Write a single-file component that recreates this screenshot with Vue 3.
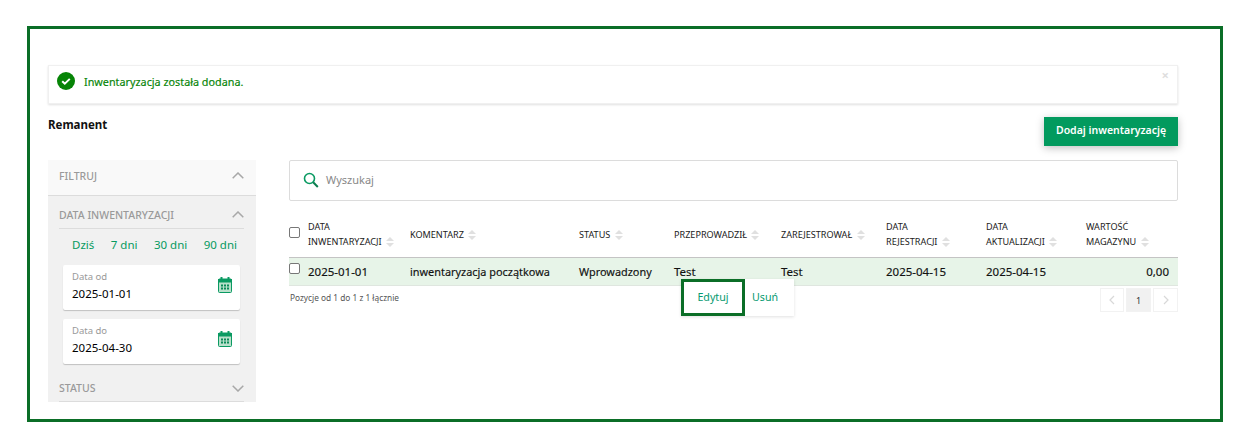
<script setup>
const columns = [
  { lines: ['DATA', 'INWENTARYZACJI'] },
  { lines: ['KOMENTARZ'] },
  { lines: ['STATUS'] },
  { lines: ['PRZEPROWADZIŁ'] },
  { lines: ['ZAREJESTROWAŁ'] },
  { lines: ['DATA', 'REJESTRACJI'] },
  { lines: ['DATA', 'AKTUALIZACJI'] },
  { lines: ['WARTOŚĆ', 'MAGAZYNU'] }
]
const row = [
  { v: '2025-01-01', c: 'date-cell' },
  { v: 'inwentaryzacja początkowa', c: '' },
  { v: 'Wprowadzony', c: '' },
  { v: 'Test', c: 'date-cell' },
  { v: 'Test', c: 'date-cell' },
  { v: '2025-04-15', c: 'date-cell' },
  { v: '2025-04-15', c: 'date-cell' },
  { v: '0,00', c: 'num date-cell' }
]
const ranges = ['Dziś', '7 dni', '30 dni', '90 dni']
const dates = [
  { label: 'Data od', value: '2025-01-01' },
  { label: 'Data do', value: '2025-04-30' }
]
</script>

<template>
  <div class="frame">
    <div class="alert">
      <svg class="ok" width="18" height="18" viewBox="0 0 18 18">
        <circle cx="9" cy="9" r="9" fill="#068406" />
        <path d="M5.2 9.2l2.6 2.5 5-4.8" fill="none" stroke="#fff" stroke-width="2" />
      </svg>
      <span class="alert-text">Inwentaryzacja została dodana.</span>
      <span class="close">×</span>
    </div>

    <div class="head">
      <h1>Remanent</h1>
      <button class="add">Dodaj inwentaryzację</button>
    </div>

    <div class="main">
      <aside class="side">
        <div class="sec-top">
          <span>FILTRUJ</span>
          <svg width="12" height="7" viewBox="0 0 12 7"><path d="M.7 6.3L6 1l5.3 5.3" fill="none" stroke="#a8a8a8" stroke-width="1.5" /></svg>
        </div>
        <div class="sec-body">
          <div class="sec-title">
            <span>DATA INWENTARYZACJI</span>
            <svg width="12" height="7" viewBox="0 0 12 7"><path d="M.7 6.3L6 1l5.3 5.3" fill="none" stroke="#a8a8a8" stroke-width="1.5" /></svg>
          </div>
          <div class="ranges">
            <a v-for="r in ranges" :key="r">{{ r }}</a>
          </div>
          <div v-for="d in dates" :key="d.label" class="date">
            <div>
              <div class="date-label">{{ d.label }}</div>
              <div class="date-value">{{ d.value }}</div>
            </div>
            <svg class="cal" width="14" height="16" viewBox="0 0 14 16">
              <rect x="0.5" y="2" width="13" height="13.5" rx="1" fill="#b9e0cb" stroke="#0a9a62" />
              <rect x="0" y="2" width="14" height="3.5" fill="#0a9a62" />
              <rect x="2.5" y="0" width="2" height="3" fill="#0a9a62" />
              <rect x="9.5" y="0" width="2" height="3" fill="#0a9a62" />
              <path d="M3 7.5h2v2H3zM6 7.5h2v2H6zM9 7.5h2v2H9zM3 10.5h2v2H3zM6 10.5h2v2H6zM9 10.5h2v2H9z" fill="#0a8a58" />
            </svg>
          </div>
          <div class="sec-title status">
            <span>STATUS</span>
            <svg width="12" height="7" viewBox="0 0 12 7"><path d="M.7.7L6 6l5.3-5.3" fill="none" stroke="#a8a8a8" stroke-width="1.5" /></svg>
          </div>
        </div>
      </aside>

      <section class="content">
        <div class="search">
          <svg width="16" height="16" viewBox="0 0 16 16">
            <circle cx="6.5" cy="6.5" r="5" fill="none" stroke="#0a9a62" stroke-width="1.6" />
            <path d="M10.2 10.2l4.6 4.8" stroke="#0b7d4f" stroke-width="2" />
          </svg>
          <span>Wyszukaj</span>
        </div>

        <div class="thead">
          <div class="check-cell"><span class="check"></span></div>
          <div v-for="c in columns" :key="c.lines.join()" class="th">
            <div v-for="(l, i) in c.lines" :key="l" class="th-line">
              {{ l }}
              <svg v-if="i === c.lines.length - 1" class="sort" width="8" height="10" viewBox="0 0 8 10">
                <path d="M4 0l4 4H0zM4 10L0 6h8z" fill="#e0e0e0" />
              </svg>
            </div>
          </div>
        </div>

        <div class="tbody">
          <div class="check-cell"><span class="check"></span></div>
          <div v-for="(cell, i) in row" :key="i" class="td" :class="cell.c">{{ cell.v }}</div>

          <div class="actions">
            <a class="edit">Edytuj</a>
            <a class="del">Usuń</a>
          </div>
        </div>

        <div class="foot">
          <span class="count">Pozycje od 1 do 1 z 1 łącznie</span>
          <div class="pager">
            <span class="pg">
              <svg width="6" height="10" viewBox="0 0 6 10"><path d="M5 1L1 5l4 4" fill="none" stroke="#d8d8d8" stroke-width="1.2" /></svg>
            </span>
            <span class="pg cur">1</span>
            <span class="pg">
              <svg width="6" height="10" viewBox="0 0 6 10"><path d="M1 1l4 4-4 4" fill="none" stroke="#d8d8d8" stroke-width="1.2" /></svg>
            </span>
          </div>
        </div>
      </section>
    </div>
  </div>
</template>

<style scoped>
.frame {
  box-sizing: border-box;
  width: 1196px;
  height: 396px;
  margin: 26px 0 0 27px;
  padding: 36px 42px 0 18px;
  border: 3px solid #0b6e27;
  font-family: "Noto Sans", sans-serif;
  color: #111;
  background: #fff;
}
.alert {
  box-sizing: border-box;
  height: 39px;
  display: flex;
  align-items: center;
  gap: 9px;
  padding: 0 0 7px 8px;
  position: relative;
  border: 1px solid #f0f0f0;
  box-shadow: 0 1px 2px rgba(0, 0, 0, .12);
}
.ok { flex: none; }
.alert-text { font-size: 10.8px; color: #068406; -webkit-text-stroke: .15px #068406; }
.close {
  position: absolute;
  right: 8px;
  top: 1px;
  font-size: 13px;
  line-height: 16px;
  font-weight: 700;
  color: #dedede;
}
.head {
  display: flex;
  justify-content: space-between;
  align-items: flex-start;
  margin-top: 13px;
  height: 43px;
}
h1 {
  margin: 0;
  font-size: 11.5px;
  line-height: 16px;
  font-weight: 700;
  color: #111;
}
.add {
  width: 134px;
  height: 29px;
  border: 0;
  padding: 0 0 3px;
  background: #029a5e;
  color: #fff;
  font: 600 10.5px "Noto Sans", sans-serif;
  box-shadow: 0 2px 8px rgba(0, 0, 0, .25);
}
.main { display: flex; gap: 33px; align-items: flex-start; }
.side { width: 208px; flex: none; }
.sec-top {
  box-sizing: border-box;
  height: 36px;
  padding: 0 12px 4px 11px;
  display: flex;
  justify-content: space-between;
  align-items: center;
  background: #f9f9f9;
  border-bottom: 1px solid #dcdcdc;
  font-size: 10.5px;
  font-weight: 500;
  color: #9a9a9a;
}
.sec-body {
  box-sizing: border-box;
  height: 206px;
  padding: 0 12px 0 11px;
  background: #f1f1f1;
}
.sec-title {
  box-sizing: border-box;
  height: 33px;
  padding-top: 5px;
  display: flex;
  justify-content: space-between;
  align-items: center;
  border-bottom: 1px solid #dcdcdc;
  font-size: 10.5px;
  font-weight: 500;
  color: #9a9a9a;
}
.sec-title.status { height: 29px; padding-top: 2px; margin-top: 9px; }
.ranges {
  display: flex;
  justify-content: space-between;
  padding: 8px 7px 0 13px;
  height: 19px;
  margin-bottom: 9px;
  font-size: 11.5px;
  line-height: 16px;
  color: #069a60;
}
.date {
  box-sizing: border-box;
  width: 177px;
  height: 45px;
  margin: 0 0 9px 4px;
  padding: 5px 8px 0 9px;
  display: flex;
  justify-content: space-between;
  background: #fff;
  border-radius: 2px;
  box-shadow: 0 1px 1px rgba(0, 0, 0, .2);
}
.date-label { font-size: 9.5px; line-height: 13px; color: #999; }
.date-value { font-size: 11.5px; line-height: 18px; margin-top: 2px; color: #000; }
.cal { margin-top: 7px; }
.content { flex: 1; min-width: 0; }
.search {
  box-sizing: border-box;
  height: 41px;
  display: flex;
  align-items: center;
  gap: 7px;
  padding: 0 0 2px 13px;
  border: 1px solid #dcdcdc;
  border-radius: 2px;
  font-size: 11px;
  color: #888;
}
.thead, .tbody {
  display: grid;
  grid-template-columns: 19px 102px 169px 95px 107px 105px 100px 100px 92px;
}
.thead {
  height: 40px;
  padding-bottom: 3px;
  margin-top: 13px;
  box-sizing: content-box;
  border-bottom: 1px solid #c4c4c4;
  align-items: center;
}
.th { font-size: 9.1px; line-height: 15px; color: #222; }
.th-line { white-space: nowrap; }
.sort { vertical-align: -2px; margin-left: 2px; }
.check-cell { display: flex; }
.check {
  box-sizing: border-box;
  width: 11px;
  height: 11px;
  border: 1px solid #777;
  border-radius: 2px;
  background: #fff;
}
.thead .check { margin-top: -4px; }
.tbody {
  position: relative;
  height: 28px;
  box-sizing: border-box;
  padding-bottom: 1px;
  background: #e7f4e8;
  border-bottom: 1px solid #dfe6df;
  align-items: center;
}
.tbody .check-cell { align-self: start; padding-top: 5px; }
.td { font-size: 10.9px; color: #111; white-space: nowrap; -webkit-text-stroke: .15px #111; }
.td.date-cell { font-size: 11.5px; }
.td.num { text-align: right; padding-right: 9px; }
.actions {
  position: absolute;
  left: 392px;
  top: 21px;
  width: 113px;
  height: 37px;
  display: flex;
  align-items: center;
  background: #fff;
  box-shadow: 0 1px 3px rgba(0, 0, 0, .12);
  font-size: 10.7px;
  color: #069a70;
}
.edit {
  box-sizing: border-box;
  width: 64px;
  height: 37px;
  margin-right: 7px;
  padding-bottom: 2px;
  display: flex;
  align-items: center;
  justify-content: center;
  border: 3px solid #0b6e27;
}
.del { margin-bottom: 2px; }
.foot {
  display: flex;
  justify-content: space-between;
  margin-top: 3px;
}
.count { font-size: 8.3px; color: #555; margin-top: 3px; padding-left: 1px; }
.pager { display: flex; gap: 2px; margin-top: -1px; }
.pg {
  box-sizing: border-box;
  width: 25px;
  height: 24px;
  display: flex;
  align-items: center;
  justify-content: center;
  border: 1px solid #f2f2f2;
  font-size: 9px;
  color: #333;
}
.pg:first-child { width: 24px; }
.pg.cur { background: #f1f1f1; }
</style>
